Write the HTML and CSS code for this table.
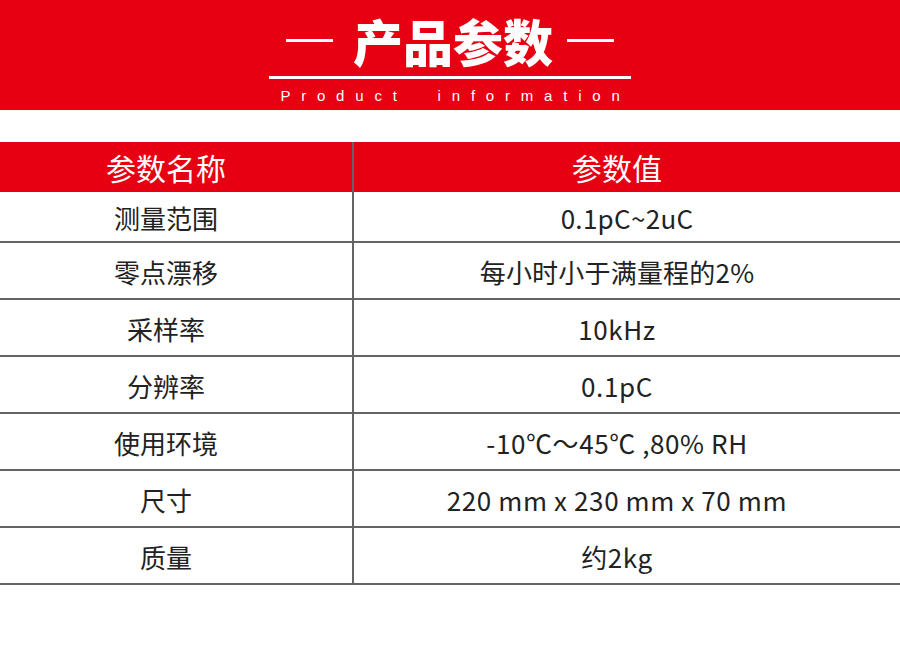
FILE: index.html
```html
<!DOCTYPE html>
<html lang="zh-CN">
<head>
<meta charset="utf-8">
<title>产品参数</title>
<link rel="stylesheet" href="styles.css">
</head>
<body>
<header class="banner">
  <div class="title-row">
    <span class="dash dash-left"></span>
    <h1 class="title">产品参数</h1>
    <span class="dash dash-right"></span>
  </div>
  <div class="rule"></div>
  <p class="subtitle">Product&nbsp;&nbsp;information</p>
</header>
<section class="spec">
  <div class="row head">
    <div class="cell">参数名称</div>
    <div class="cell">参数值</div>
  </div>
  <div class="row first">
    <div class="cell">测量范围</div>
    <div class="cell shift">0.1pC~2uC</div>
  </div>
  <div class="row">
    <div class="cell">零点漂移</div>
    <div class="cell">每小时小于满量程的2%</div>
  </div>
  <div class="row">
    <div class="cell">采样率</div>
    <div class="cell latin">10kHz</div>
  </div>
  <div class="row">
    <div class="cell">分辨率</div>
    <div class="cell latin">0.1pC</div>
  </div>
  <div class="row">
    <div class="cell">使用环境</div>
    <div class="cell latin">-10℃～45℃ ,80% RH</div>
  </div>
  <div class="row">
    <div class="cell">尺寸</div>
    <div class="cell latin">220 mm x 230 mm x 70 mm</div>
  </div>
  <div class="row">
    <div class="cell">质量</div>
    <div class="cell latin">约2kg</div>
  </div>
</section>
</body>
</html>
```
FILE: styles.css
```css
* { box-sizing: border-box; }
html, body { margin: 0; padding: 0; background: #ffffff; }
body {
  width: 900px;
  height: 648px;
  font-family: "Noto Sans CJK SC", "Noto Sans", sans-serif;
  color: #222222;
  overflow: hidden;
}
.banner {
  background: #e60012;
  height: 110px;
  display: flex;
  flex-direction: column;
  align-items: center;
  color: #ffffff;
}
.title-row {
  display: flex;
  align-items: center;
  margin-top: 14px;
  height: 52px;
}
.dash {
  display: block;
  width: 47px;
  height: 3px;
  background: #ffffff;
}
.dash-left { margin-right: 20px; }
.dash-right { margin-left: 14px; }
.title {
  margin: 0;
  font-size: 50px;
  line-height: 52px;
  font-weight: 900;
  letter-spacing: 0;
}
.rule {
  width: 362px;
  height: 3px;
  background: #ffffff;
  margin-top: 10px;
}
.subtitle {
  margin: 8px 0 0 0;
  font-family: "Liberation Sans", Arial, sans-serif;
  font-size: 15px;
  line-height: 18px;
  letter-spacing: 10.8px;
  padding-left: 11px;
}
.spec {
  margin-top: 32px;
}
.row {
  display: grid;
  grid-template-columns: 352px 1fr;
  height: 57px;
  border-bottom: 2px solid #646464;
}
.row.head {
  height: 50px;
  background: #e60012;
  color: #ffffff;
  border-bottom: none;
  font-size: 30px;
}
.row.first { height: 51px; }
.cell {
  display: flex;
  align-items: center;
  justify-content: center;
  padding-right: 20px;
  font-size: 26px;
  padding-top: 2px;
}
.row.head .cell { font-size: 30px; padding-top: 0; }
.cell + .cell { border-left: 2px solid #646464; letter-spacing: 0.2px; }
.cell.latin { letter-spacing: 0.6px; }
.cell.shift { padding-right: 0; letter-spacing: 0.3px; }
```
